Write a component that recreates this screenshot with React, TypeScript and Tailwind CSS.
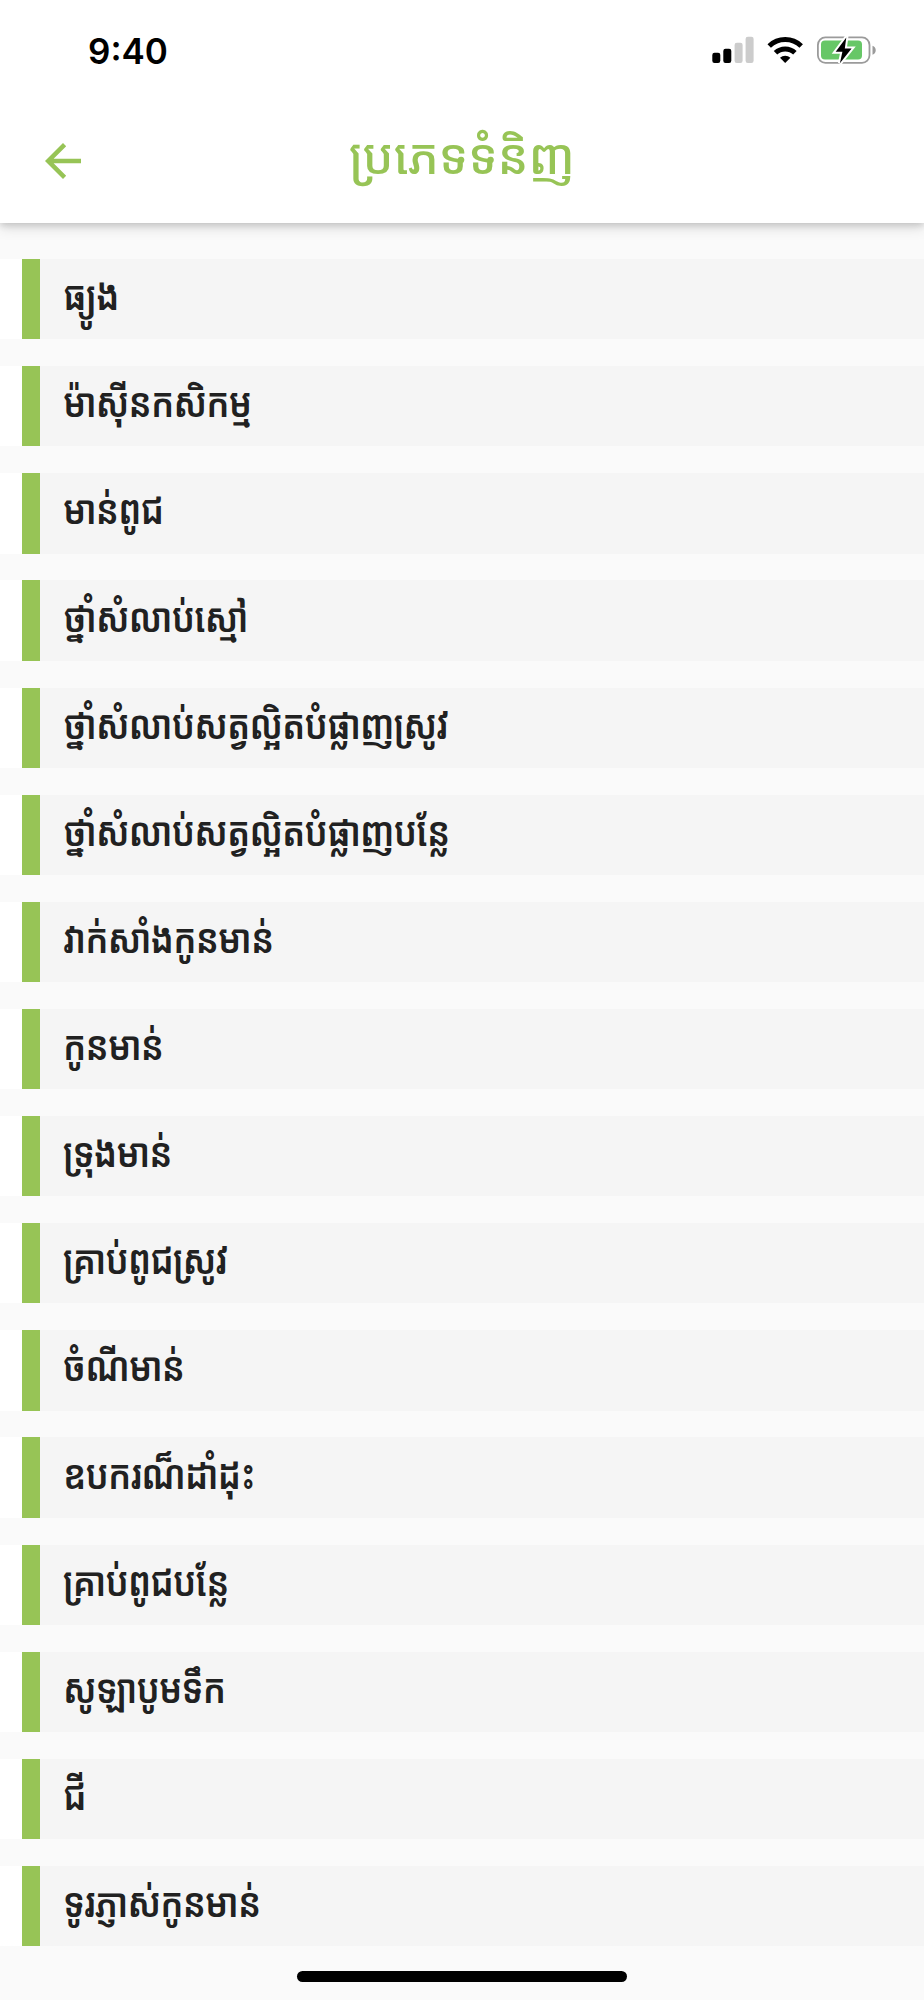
import React from "react";

interface Category {
  name: string;
}

const categories: Category[] = [
  { name: "ធ្យូង" },
  { name: "ម៉ាស៊ីនកសិកម្ម" },
  { name: "មាន់ពូជ" },
  { name: "ថ្នាំសំលាប់ស្មៅ" },
  { name: "ថ្នាំសំលាប់សត្វល្អិតបំផ្លាញស្រូវ" },
  { name: "ថ្នាំសំលាប់សត្វល្អិតបំផ្លាញបន្លែ" },
  { name: "វាក់សាំងកូនមាន់" },
  { name: "កូនមាន់" },
  { name: "ទ្រុងមាន់" },
  { name: "គ្រាប់ពូជស្រូវ" },
  { name: "ចំណីមាន់" },
  { name: "ឧបករណ៏ដាំដុះ" },
  { name: "គ្រាប់ពូជបន្លែ" },
  { name: "សូឡាបូមទឹក" },
  { name: "ជី" },
  { name: "ទូរភ្ញាស់កូនមាន់" },
];

const StatusIcons = () => (
  <svg className="block h-[40px] w-[180px]" viewBox="0 0 180 40" fill="none">
    {/* Signal */}
    <rect x="2.3" y="18.8" width="8" height="10.2" rx="2.2" fill="#000" />
    <rect x="13.3" y="14.8" width="8" height="14.2" rx="2.2" fill="#000" />
    <rect x="24.6" y="8.8" width="8" height="20.2" rx="2.2" fill="#ccc" />
    <rect x="35.6" y="2.8" width="8" height="26.2" rx="2.2" fill="#ccc" />
    {/* Wifi */}
    <g stroke="#000" strokeWidth="5">
      <path d="M59.2 12a23.2 23.2 0 0 1 32 0" />
      <path d="M65.5 18.8a14 14 0 0 1 19.4 0" />
    </g>
    <path d="M75.2 29l-5.2-5.2a7.6 7.6 0 0 1 10.4 0z" fill="#000" />
    {/* Battery */}
    <rect x="107.9" y="3.4" width="51.6" height="25.4" rx="7.5" stroke="#9b9b9b" strokeWidth="1.8" />
    <rect x="111" y="6.6" width="41" height="19" rx="4" fill="#67c767" />
    <path d="M162.5 11.8c4.3 1.5 4.3 7.5 0 9z" fill="#9b9b9b" />
    <path
      d="M136.3 3.5l-10.6 14.2h6.7l-2.5 11.5 11.7-14.7h-6.8z"
      fill="#000"
      stroke="#fff"
      strokeWidth="4"
      paintOrder="stroke"
    />
  </svg>
);

const StatusBar = () => (
  <div className="flex h-[100px] items-start justify-between pt-[34px] pr-[34px] pl-[88px]">
    <span className="font-['Inter'] text-[35px] leading-[34px] font-semibold text-black">9:40</span>
    <StatusIcons />
  </div>
);

const Header = () => (
  <header className="relative h-[223px] bg-white shadow-[0_2px_7px_rgba(0,0,0,0.16),0_6px_12px_rgba(0,0,0,0.1)]">
    <StatusBar />
    <div className="grid grid-cols-[124px_1fr_124px] items-center">
      <button className="flex h-[122px] items-center pl-[36px]" aria-label="Back">
        <svg className="h-[54px] w-[54px]" viewBox="0 0 24 24" fill="#97c456">
          <path d="M20 11H7.83l5.59-5.59L12 4l-8 8 8 8 1.41-1.41L7.83 13H20v-2z" />
        </svg>
      </button>
      <h1 className="scale-x-96 pb-[13px] text-center text-[50px] leading-[60px] font-medium whitespace-nowrap text-[#97c456]">
        ប្រភេទទំនិញ
      </h1>
    </div>
  </header>
);

const CategoryRow: React.FC<Category> = ({ name }) => (
  <li className="flex h-[80.3px] bg-white pl-[22px]">
    <div className="w-[18px] bg-[#97c456]" />
    <div className="flex flex-1 items-center bg-[#f5f5f5] pb-2 pl-[22.5px]">
      <span className="origin-left scale-x-88 text-[40px] leading-[50px] font-semibold tracking-[-1px] whitespace-nowrap text-[#212121]">
        {name}
      </span>
    </div>
  </li>
);

export default function App() {
  return (
    <div className="flex h-[2000px] w-[924px] flex-col overflow-hidden bg-[#fafafa] font-['Noto_Sans_Khmer','Noto_Sans',sans-serif]">
      <Header />
      <ul className="flex flex-col gap-[26.83px] pt-[36px]">
        {categories.map((c) => (
          <CategoryRow key={c.name} name={c.name} />
        ))}
      </ul>
      <div className="mx-auto mt-[24.8px] h-[11px] w-[330px] rounded-full bg-black" />
    </div>
  );
}
